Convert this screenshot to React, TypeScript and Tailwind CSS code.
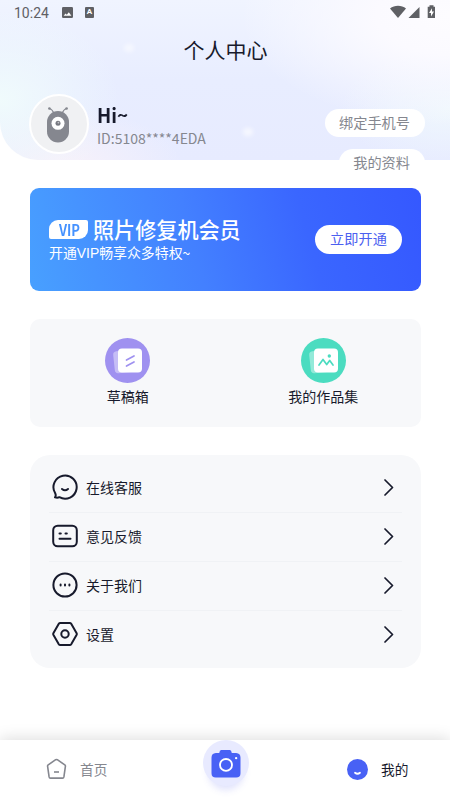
import { clsx } from 'clsx'
import type { ReactNode } from 'react'

const INK = '#171a2c'

export default function App() {
  return (
    <div className="relative flex h-[800px] w-[450px] flex-col overflow-hidden bg-white font-['Noto_Sans_CJK_SC',sans-serif] text-[#171a2c]">
      <Header />
      <main className="flex flex-col gap-7 pt-7 pr-[29px] pl-[30px]">
        <VipCard />
        <Shortcuts />
        <Menu />
      </main>
      <TabBar />
    </div>
  )
}

function Header() {
  return (
    <header className="relative h-[160px] flex-none rounded-bl-[38px] bg-[radial-gradient(ellipse_210px_110px_at_100%_10%,#fdfcff_0%,#fbfaff_35%,transparent_100%),radial-gradient(ellipse_110px_60px_at_100%_68%,#eff7fd_0%,transparent_100%),radial-gradient(ellipse_120px_90px_at_0%_62%,#f0fbfc_0%,transparent_100%),radial-gradient(ellipse_120px_60px_at_14%_105%,#f8f2fa_0%,transparent_100%),linear-gradient(180deg,#f0f4ff_0%,#e8edff_50%,#e7ebff_100%)]">
      <span className="absolute top-[44px] left-[124px] h-2 w-2.5 rounded-full bg-white/50 blur-[2px]" />
      <span className="absolute top-[128px] left-[243px] h-2 w-2.5 rounded-full bg-white/60 blur-[2px]" />
      <StatusBar />
      <h1 className="flex h-[48px] items-center justify-center pl-px text-[21px] leading-none font-normal text-[#171a2c]">
        个人中心
      </h1>
      <div className="flex pt-[21px] pl-[29px]">
        <Avatar />
        <div className="flex flex-col pt-[10px] pl-2">
          <p className="origin-left scale-x-[0.94] text-[20px] leading-[22px] font-bold">Hi~</p>
          <p className="text-[14px] leading-6 text-[#85878f]">ID:5108****4EDA</p>
        </div>
        <div className="mt-[15px] mr-[25px] ml-auto flex flex-col items-end gap-3">
          <PillButton label="绑定手机号" />
          <PillButton label="我的资料" />
        </div>
      </div>
    </header>
  )
}

function StatusBar() {
  return (
    <div className="flex h-[25px] items-center pt-px pr-[14px] pl-[14px] text-[#5f6065]">
      <span className="w-[48px] font-['Roboto',sans-serif] text-[14px] leading-none">10:24</span>
      <svg width="11" height="11" viewBox="0 0 11 11" className="-mt-0.5">
        <rect width="11" height="11" rx="1.3" fill="currentColor" />
        <path d="M1.7 8.8 3.5 6.4 4.8 7.8 6.8 5.2 9.4 8.8Z" fill="#fff" />
      </svg>
      <span className="-mt-0.5 ml-[12px] flex h-[11px] w-[9px] items-center justify-center rounded-[1px] bg-[#5f6065] font-['Roboto',sans-serif] text-[8px] leading-none font-bold text-white">
        A
      </span>
      <svg width="46" height="14" viewBox="0 0 46 14" className="-mt-0.5 ml-auto" fill="currentColor">
        <path d="M0 3.4C4.4-.1 11.6-.1 16 3.4L8 13Z" />
        <path d="M18.5 13 29.5 2V13Z" />
        <path d="M39.5.3h4v1.5h1.5V13h-7.3V1.8h1.8Z" />
        <path d="m42 3.3-3 4.6h2v3.5l3-4.8h-2Z" fill="#fff" />
      </svg>
    </div>
  )
}

function Avatar() {
  return (
    <div className="flex size-[60px] items-center justify-center rounded-full border-2 border-white bg-[#f0f1f3]">
      <svg width="26" height="38" viewBox="0 0 26 38" fill="none" className="mr-[2px]">
        <path d="M9 8.5Q7.5 4.5 4.5 3.5M17 8.5Q18.5 4.5 21.5 3.5" stroke="#85878f" strokeWidth="1.2" />
        <circle cx="4.4" cy="3.5" r="1.3" fill="#85878f" />
        <circle cx="21.6" cy="3.5" r="1.3" fill="#85878f" />
        <rect x="2" y="6" width="22" height="31.5" rx="11" fill="#85878f" />
        <circle cx="13" cy="18.3" r="6.5" fill="#fff" />
        <circle cx="13" cy="18.3" r="2.5" fill="#777981" />
        <circle cx="13.4" cy="17.6" r=".9" fill="#c4c5c9" />
      </svg>
    </div>
  )
}

function PillButton({ label }: { label: string }) {
  return (
    <button className="flex h-7 items-center rounded-full bg-white pr-[15px] pb-px pl-[14px] text-[14.2px] leading-none whitespace-nowrap text-[#85878f]">
      {label}
    </button>
  )
}

function VipCard() {
  return (
    <section className="flex h-[103px] items-center rounded-[9px] bg-[linear-gradient(75deg,#48a0ff_0%,#4380ff_42%,#3a66ff_70%,#3558ff_100%)] pr-[19px] pl-[19px] text-white">
      <div className="pb-px">
        <div className="flex h-[26px] items-center gap-[5px]">
          <span className="mt-0.5 flex h-[19px] w-[39px] items-center justify-center rounded-tl-[9px] rounded-tr-[2px] rounded-br-[9px] rounded-bl-[2px] bg-white pl-0.5">
            <span className="scale-x-[0.84] pb-px text-[15.5px] leading-[19px] font-bold text-[#4592ff]">VIP</span>
          </span>
          <h2 className="text-[21.1px] leading-[26px] font-medium">照片修复机会员</h2>
        </div>
        <p className="pt-px text-[13.9px] leading-[19px] font-normal">
          开通<span className="font-['Liberation_Sans',sans-serif]">VIP</span>畅享众多特权~
        </p>
      </div>
      <button className="ml-auto flex h-[29px] w-[87px] items-center justify-center rounded-full bg-white pb-0.5 text-[14.2px] leading-none text-[#4c60f0]">
        立即开通
      </button>
    </section>
  )
}

function Shortcuts() {
  return (
    <section className="grid h-[108px] grid-cols-2 rounded-[10px] bg-[#f7f8fa] pt-[19px]">
      <Shortcut label="草稿箱" color="#9f91f0">
        <path d="m21.5 22 7.5-4M21.5 28l7.5-4" stroke="#9f91f0" strokeWidth="1.7" strokeLinecap="round" />
      </Shortcut>
      <Shortcut label="我的作品集" color="#4bdcc0">
        <path
          d="m18 27 4-5.5 3.7 5 3-4 3.3 4.5"
          stroke="#4bdcc0"
          strokeWidth="1.7"
          strokeLinecap="round"
          strokeLinejoin="round"
        />
        <circle cx="28.3" cy="18" r="1.7" fill="#4bdcc0" />
      </Shortcut>
    </section>
  )
}

function Shortcut({ label, color, children }: { label: string; color: string; children: ReactNode }) {
  return (
    <div className="flex flex-col items-center">
      <svg width="45" height="45" viewBox="0 0 45 45" fill="none">
        <circle cx="22.5" cy="22.5" r="22.5" fill={color} />
        <rect x="9" y="12.5" width="22" height="22" rx="3.5" fill="#fff" opacity=".4" transform="rotate(-6 20 24)" />
        <rect x="13" y="10.5" width="24" height="24" rx="4" fill="#fff" />
        {children}
      </svg>
      <span className="mt-[3px] text-[14px] leading-5">{label}</span>
    </div>
  )
}

const MENU = [
  { label: '在线客服', icon: <ChatIcon /> },
  { label: '意见反馈', icon: <FeedbackIcon /> },
  { label: '关于我们', icon: <AboutIcon /> },
  { label: '设置', icon: <SettingsIcon /> },
]

function Menu() {
  return (
    <section className="h-[213px] rounded-[20px] bg-[#f7f8fa] px-[19px] pt-[9px]">
      {MENU.map(({ label, icon }, i) => (
        <div
          key={label}
          className={clsx(
            'flex h-[49px] items-center border-b pb-0.5 pl-[3px]',
            i < MENU.length - 1 ? 'border-[#f0f2f5]' : 'border-transparent'
          )}
        >
          {icon}
          <span className="ml-[8px] text-[14px] leading-5">{label}</span>
          <svg width="10" height="17" viewBox="0 0 10 17" fill="none" className="mr-[8px] ml-auto">
            <path d="m1 1 7.5 7.5L1 16" stroke={INK} strokeWidth="1.7" strokeLinecap="round" strokeLinejoin="round" />
          </svg>
        </div>
      ))}
    </section>
  )
}

function MenuSvg({ children }: { children: ReactNode }) {
  return (
    <svg
      width="26"
      height="26"
      viewBox="0 0 26 26"
      fill="none"
      stroke={INK}
      strokeWidth="2"
      strokeLinecap="round"
      strokeLinejoin="round"
    >
      {children}
    </svg>
  )
}

function ChatIcon() {
  return (
    <MenuSvg>
      <path d="M3.1 19A11.6 11.6 0 1 1 7.4 23.2Q5.5 24.200 3 23.400Q4.400 21.500 3.100 19Z" />
      <path d="M10 15q3 2.600 6 0" />
    </MenuSvg>
  )
}

function FeedbackIcon() {
  return (
    <MenuSvg>
      <rect x="1.2" y="2.7" width="23.6" height="20.6" rx="4.5" />
      <path d="M7.5 10.5h1.3M13.5 10.5h1.3M7.5 15.7h11" />
    </MenuSvg>
  )
}

function AboutIcon() {
  return (
    <MenuSvg>
      <circle cx="13" cy="13" r="11.6" />
      <path d="M8.6 12.6v.8M13 12.6v.8M17.4 12.6v.8" />
    </MenuSvg>
  )
}

function SettingsIcon() {
  return (
    <MenuSvg>
      <path d="M8.3 2h9.4q1 0 1.5.8l5.3 9.1q.6 1.1 0 2.2l-5.3 9.1q-.5.8-1.5.8H8.3q-1 0-1.5-.8L1.5 14.1q-.6-1.1 0-2.2l5.3-9.1Q7.3 2 8.3 2Z" />
      <circle cx="13" cy="13" r="3.7" />
    </MenuSvg>
  )
}

function TabBar() {
  return (
    <nav className="mt-auto grid h-[60px] grid-cols-3 bg-white shadow-[0_-2px_14px_rgba(0,0,0,0.13)]">
      <button className="flex items-center pb-0.5 pl-[46px] text-[13.7px] text-[#85878f]">
        <svg width="21" height="22" viewBox="0 0 21 22" fill="none" stroke="currentColor" strokeWidth="1.6">
          <path
            d="M9.7 1.7q.8-.5 1.6 0l7.5 5.2q.8.6.6 1.5l-1.5 10.5q-.2 1.2-1.3 1.2H4.4q-1.1 0-1.3-1.2l-1.5-10.5q-.2-.9.6-1.5Z"
            strokeLinejoin="round"
          />
          <path d="M8 14h5" />
        </svg>
        <span className="ml-[13px]">首页</span>
      </button>
      <button className="flex items-start justify-center pl-px">
        <span className="flex size-[46px] items-center justify-center rounded-full bg-[#e8eaff] pt-px shadow-[0_9px_7px_-5px_rgba(90,100,240,0.18)]">
          <svg width="30" height="29" viewBox="0 0 30 30" fill="none">
            <path
              d="M8 4.2Q8.5 1 10 1h9q1.5 0 2 3.2h4.5Q30 4.5 30 9v16q0 4.5-4.5 4.5h-21Q0 29.5 0 25V9Q0 4.5 4.5 4.2Z"
              fill="#4861f5"
            />
            <circle cx="15" cy="16.5" r="6.2" stroke="#fff" strokeWidth="1.9" />
            <circle cx="25.5" cy="9.5" r="1.2" fill="#fff" />
          </svg>
        </span>
      </button>
      <button className="flex items-center pb-0.5 pl-[47px] text-[13.7px] text-[#171a2c]">
        <svg width="21" height="21" viewBox="0 0 21 21" fill="none">
          <circle cx="10.5" cy="10.5" r="10.5" fill="#4861f5" />
          <path d="M8 13.7q2.5 2 5 0" stroke="#fff" strokeWidth="1.8" strokeLinecap="round" />
        </svg>
        <span className="ml-[13px]">我的</span>
      </button>
    </nav>
  )
}
